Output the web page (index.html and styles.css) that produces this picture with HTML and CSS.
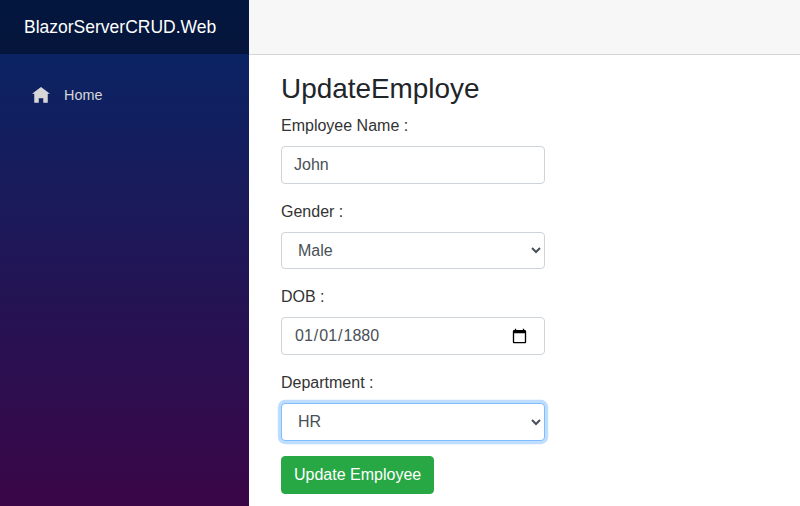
FILE: index.html
```html
<!DOCTYPE html>
<html lang="en">
<head>
    <meta charset="UTF-8">
    <meta name="viewport" content="width=device-width, initial-scale=1.0">
    <title>UpdateEmploye</title>

    <!-- Style CSS -->
    <link rel="stylesheet" href="styles.css">
</head>
<body>
    <div class="sidebar">
        <div class="brand-row">
            <a class="brand" href="#">BlazorServerCRUD.Web</a>
        </div>
        <nav class="nav-list">
            <a class="nav-link" href="#">
                <svg class="nav-icon" viewBox="0 0 8 8" aria-hidden="true">
                    <path d="M4 0l-4 3h1v4h2v-2h2v2h2v-4.03l1 .03-4-3z"></path>
                </svg>
                Home
            </a>
        </nav>
    </div>
    <div class="main">
        <div class="top-row"></div>
        <div class="content">
            <h3 class="title">UpdateEmploye</h3>
            <form class="employee-form">
                <div class="form-group">
                    <label for="name">Employee Name :</label>
                    <input type="text" id="name" class="form-control" value="John">
                </div>
                <div class="form-group">
                    <label for="gender">Gender :</label>
                    <select id="gender" class="form-control">
                        <option>Male</option>
                        <option>Female</option>
                    </select>
                </div>
                <div class="form-group">
                    <label for="dob">DOB :</label>
                    <input type="date" id="dob" class="form-control" value="1880-01-01">
                </div>
                <div class="form-group">
                    <label for="department">Department :</label>
                    <select id="department" class="form-control is-focused">
                        <option>HR</option>
                        <option>IT</option>
                        <option>Payroll</option>
                    </select>
                </div>
                <button type="button" class="btn">Update Employee</button>
            </form>
        </div>
    </div>
</body>
</html>
```

FILE: styles.css
```css
* {
    margin: 0;
    padding: 0;
    box-sizing: border-box;
}

body {
    font-family: "Liberation Sans", Arial, sans-serif;
    font-size: 16px;
    line-height: 1.5;
    color: #212529;
    background-color: #fff;
    display: flex;
    min-height: 100vh;
    overflow: hidden;
}

.sidebar {
    width: 249px;
    flex-shrink: 0;
    background-image: linear-gradient(180deg, #052767 0%, #3a0647 100%);
}

.brand-row {
    height: 54px;
    display: flex;
    align-items: center;
    padding-left: 24px;
    background-color: rgba(0, 0, 0, 0.4);
}

.brand {
    font-size: 17.5px;
    color: #fff;
    text-decoration: none;
}

.nav-list {
    padding: 18px 16px 16px;
}

.nav-link {
    display: flex;
    align-items: center;
    height: 48px;
    padding-left: 16px;
    font-size: 14.4px;
    color: #d7d7d7;
    text-decoration: none;
}

.nav-icon {
    width: 18px;
    height: 18px;
    margin-right: 14px;
    fill: #d7d7d7;
}

.main {
    flex: 1;
    min-width: 0;
}

.top-row {
    height: 55px;
    background-color: #f7f7f7;
    border-bottom: 1px solid #d6d5d5;
}

.content {
    padding: 17px 32px 0;
}

.title {
    font-size: 27.9px;
    font-weight: 500;
    line-height: 1.2;
    margin-bottom: 8.5px;
}

.employee-form {
    width: 264px;
}

.form-group {
    margin-bottom: 15.9px;
}

.form-group label {
    display: block;
    margin-bottom: 8px;
    color: #333;
}

.form-control {
    display: block;
    width: 100%;
    height: 37.8px;
    padding: 6px 12px;
    font-family: inherit;
    font-size: 16px;
    line-height: 1.5;
    color: #495057;
    background-color: #fff;
    border: 1px solid #ced4da;
    border-radius: 4px;
    outline: none;
}

.form-control::-webkit-calendar-picker-indicator {
    width: 17px;
    height: 17px;
    margin-right: 2px;
}

.is-focused {
    border-color: #80bdff;
    box-shadow: 0 0 0 3.2px rgba(0, 123, 255, 0.25);
}

.btn {
    display: inline-block;
    margin-top: -1px;
    padding: 6px 11.5px 6px 12px;
    font-family: inherit;
    font-size: 16px;
    line-height: 1.5;
    color: #fff;
    background-color: #28a745;
    border: 1px solid #28a745;
    border-radius: 4px;
    cursor: pointer;
}

.btn:hover {
    background-color: #218838;
}
```
